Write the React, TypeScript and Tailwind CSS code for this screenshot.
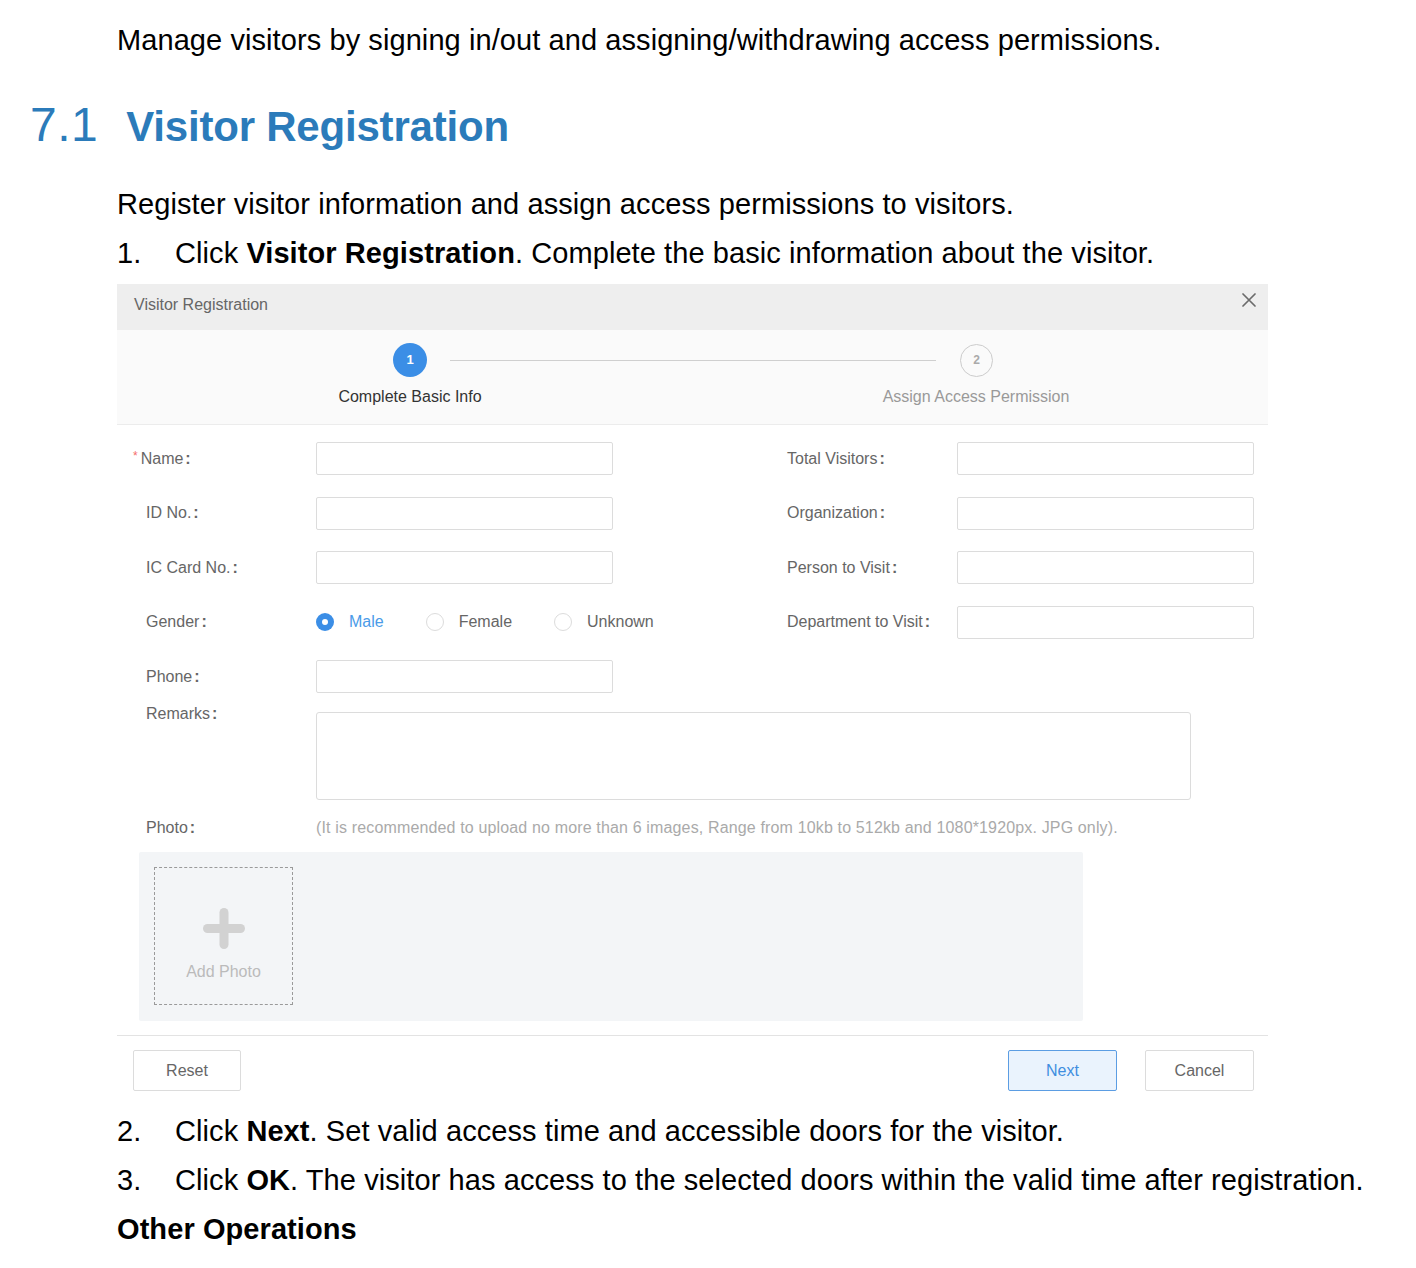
import React from "react";

function Radio({ checked, label }: { checked?: boolean; label: string }) {
  return (
    <div className="flex items-center mr-[42px]">
      {checked ? (
        <span className="w-[18px] h-[18px] rounded-full bg-[#3b8ee6] flex items-center justify-center">
          <span className="w-[6px] h-[6px] rounded-full bg-white" />
        </span>
      ) : (
        <span className="w-[18px] h-[18px] rounded-full border border-[#dcdcdc] bg-white" />
      )}
      <span className={"ml-[15px] text-[16px] " + (checked ? "text-[#4a9be8]" : "text-[#666]")}>{label}</span>
    </div>
  );
}

function Input() {
  return <div className="w-[297px] h-[33px] border border-[#dcdcdc] rounded-[2px] bg-white" />;
}

function Label({ text, star }: { text: string; star?: boolean }) {
  return (
    <div className="w-[170px] text-[16px] leading-[20px] text-[#666] flex items-center">
      {star && <span className="-ml-[13px] mr-[3px] text-[12px] text-[#f56c6c] self-start leading-[14px]">*</span>}
      {text}
      <span className="ml-[2px] font-bold">:</span>
    </div>
  );
}

export default function App() {
  return (
    <div className="w-[1416px] min-h-[1268px] bg-white text-black pt-[16px] tracking-[0.08px] font-['Liberation_Sans',Arial,sans-serif]">
      <p className="pl-[117px] text-[29px] leading-[49px]">
        Manage visitors by signing in/out and assigning/withdrawing access permissions.
      </p>
      <div className="mt-[30px] h-[60px] flex items-baseline pl-[30px] leading-[60px] text-[#2b7bba] tracking-normal">
        <span className="text-[48px] tracking-[0.5px]">7.1</span>
        <span className="ml-[28px] text-[42px] font-bold tracking-[-0.2px]">Visitor Registration</span>
      </div>
      <p className="mt-[25px] pl-[117px] text-[29px] leading-[49px]">
        Register visitor information and assign access permissions to visitors.
      </p>
      <div className="pl-[117px] flex text-[29px] leading-[49px]">
        <span className="w-[58px]">1.</span>
        <span>
          Click <b>Visitor Registration</b>. Complete the basic information about the visitor.
        </span>
      </div>

      {/* Dialog */}
      <div className="mt-[6px] ml-[117px] w-[1151px] bg-white tracking-normal">
        <div className="h-[46px] bg-[#eeeeee] flex items-start justify-between pl-[17px] pr-[12px]">
          <span className="mt-[11px] text-[16px] leading-[20px] text-[#666]">Visitor Registration</span>
          <svg className="mt-[9px]" width="14" height="14" viewBox="0 0 14 14">
            <path d="M1 1L13 13M13 1L1 13" stroke="#6b6b6b" strokeWidth="1.7" strokeLinecap="round" />
          </svg>
        </div>
        <div className="h-[95px] bg-[#fafafa] border-b border-[#ececec] pt-[13px]">
          <div className="flex items-center pl-[276px]">
            <span className="w-[34px] h-[34px] rounded-full bg-[#3b8ee6] text-white text-[13px] font-bold flex items-center justify-center">
              1
            </span>
            <span className="ml-[23px] w-[486px] h-px bg-[#cfcfcf]" />
            <span className="ml-[24px] w-[33px] h-[33px] rounded-full border border-[#cccccc] text-[#aaa] text-[12px] font-bold flex items-center justify-center">
              2
            </span>
          </div>
          <div className="mt-[10px] flex pl-[173px] text-[16px] leading-[20px]">
            <span className="w-[240px] text-center text-[#333]">Complete Basic Info</span>
            <span className="ml-[326px] w-[240px] text-center text-[#999]">Assign Access Permission</span>
          </div>
        </div>

        <div className="pt-[17px] pl-[29px]">
          <div className="flex flex-col gap-[21.5px]">
            <div className="flex items-center h-[33px]">
              <Label star text="Name" />
              <Input />
              <div className="w-[174px]" />
              <Label text="Total Visitors" />
              <Input />
            </div>
            <div className="flex items-center h-[33px]">
              <Label text="ID No." />
              <Input />
              <div className="w-[174px]" />
              <Label text="Organization" />
              <Input />
            </div>
            <div className="flex items-center h-[33px]">
              <Label text="IC Card No." />
              <Input />
              <div className="w-[174px]" />
              <Label text="Person to Visit" />
              <Input />
            </div>
            <div className="flex items-center h-[33px]">
              <Label text="Gender" />
              <div className="w-[297px] flex items-center">
                <Radio checked label="Male" />
                <Radio label="Female" />
                <Radio label="Unknown" />
              </div>
              <div className="w-[174px]" />
              <Label text="Department to Visit" />
              <Input />
            </div>
            <div className="flex items-center h-[33px]">
              <Label text="Phone" />
              <Input />
            </div>
          </div>
          <div className="mt-[11px] flex items-start">
            <Label text="Remarks" />
            <div className="mt-[8px] w-[875px] h-[88px] border border-[#dcdcdc] rounded-[3px] bg-white" />
          </div>
          <div className="mt-[18px] flex items-center">
            <Label text="Photo" />
            <span className="text-[16px] leading-[20px] tracking-[0.15px] text-[#aaaaaa]">
              (It is recommended to upload no more than 6 images, Range from 10kb to 512kb and 1080*1920px. JPG only).
            </span>
          </div>
        </div>
        <div className="mt-[14px] ml-[22px] w-[944px] bg-[#f3f5f7] p-[15px] pb-[16px] rounded-[2px]">
          <div className="w-[139px] h-[138px] border border-dashed border-[#9a9a9a] flex flex-col items-center pt-[40px]">
            <svg width="42" height="41" viewBox="0 0 42 41">
              <rect x="0" y="16" width="42" height="9" rx="4.5" fill="#d2d2d2" />
              <rect x="16.5" y="0" width="9" height="41" rx="4.5" fill="#d2d2d2" />
            </svg>
            <span className="mt-[13px] text-[16px] leading-[20px] text-[#bbbbbb]">Add Photo</span>
          </div>
        </div>
        <div className="mt-[14px] border-t border-[#e3e3e3] pt-[14px] pb-[7px] flex items-center pl-[16px] pr-[14px]">
          <button className="w-[108px] h-[41px] border border-[#dcdcdc] rounded-[2px] bg-white text-[16px] text-[#666]">
            Reset
          </button>
          <div className="flex-1" />
          <button className="w-[109px] h-[41px] border border-[#5b9de3] rounded-[2px] bg-[#eaf3fd] text-[16px] text-[#3f8ee0]">
            Next
          </button>
          <button className="ml-[28px] w-[109px] h-[41px] border border-[#dcdcdc] rounded-[2px] bg-white text-[16px] text-[#666]">
            Cancel
          </button>
        </div>
      </div>

      <div className="mt-[9px] pl-[117px] flex text-[29px] leading-[49px]">
        <span className="w-[58px]">2.</span>
        <span>
          Click <b>Next</b>. Set valid access time and accessible doors for the visitor.
        </span>
      </div>
      <div className="pl-[117px] flex text-[29px] leading-[49px]">
        <span className="w-[58px]">3.</span>
        <span>
          Click <b>OK</b>. The visitor has access to the selected doors within the valid time after registration.
        </span>
      </div>
      <p className="pl-[117px] text-[29px] leading-[49px] font-bold">Other Operations</p>
    </div>
  );
}
